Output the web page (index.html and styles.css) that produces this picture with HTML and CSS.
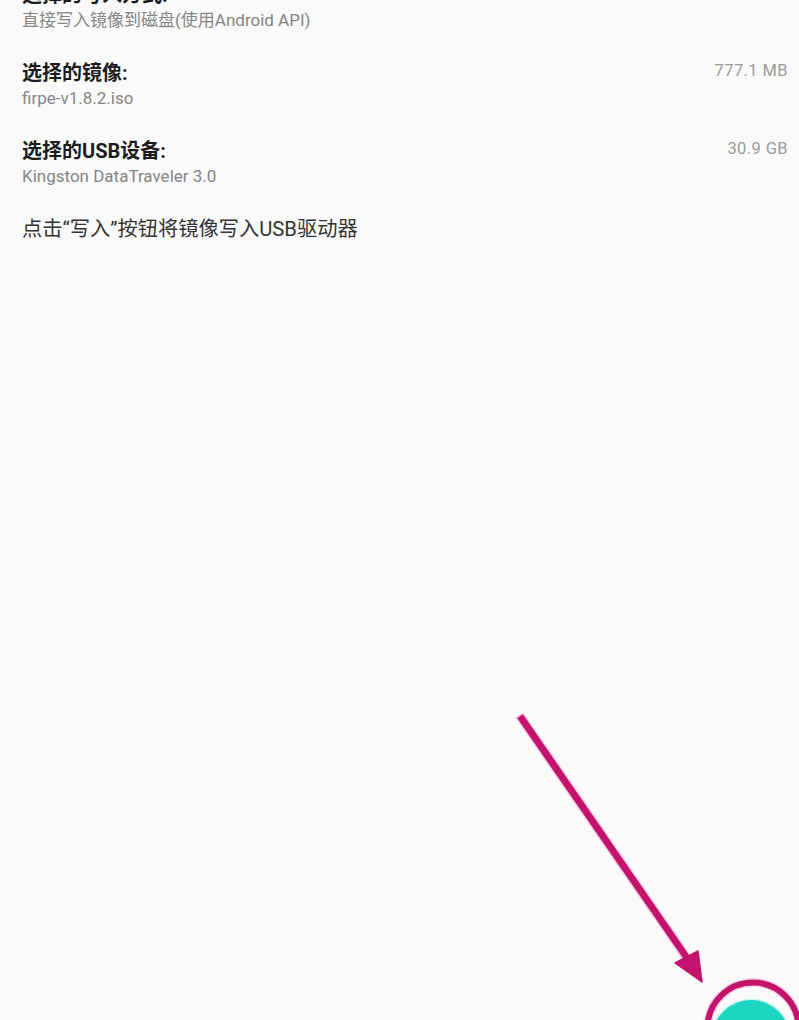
FILE: index.html
```html
<!DOCTYPE html>
<html lang="zh-CN">
<head>
<meta charset="utf-8">
<title>写入</title>
<link rel="stylesheet" href="styles.css">
</head>
<body>
<main class="page">
  <section class="list">
    <div class="row">
      <div class="info">
        <div class="title">选择的写入方式:</div>
        <div class="sub">直接写入镜像到磁盘(使用Android API)</div>
      </div>
    </div>
    <div class="row">
      <div class="info">
        <div class="title">选择的镜像:</div>
        <div class="sub">firpe-v1.8.2.iso</div>
      </div>
      <div class="value">777.1 MB</div>
    </div>
    <div class="row">
      <div class="info">
        <div class="title">选择的USB设备:</div>
        <div class="sub">Kingston DataTraveler 3.0</div>
      </div>
      <div class="value">30.9 GB</div>
    </div>
  </section>
  <p class="hint">点击“写入”按钮将镜像写入USB驱动器</p>
</main>
<div class="fab"></div>
<svg class="annot" width="799" height="1020" viewBox="0 0 799 1020" xmlns="http://www.w3.org/2000/svg">
  <g stroke="#f6b9d8" stroke-opacity="0.6" fill="none">
    <line x1="522" y1="719" x2="687" y2="958" stroke-width="10" stroke-linecap="square"/>
    <circle cx="753" cy="1028" r="45.5" stroke-width="9"/>
  </g>
  <line x1="522" y1="719" x2="687" y2="958" stroke="#c3136c" stroke-width="7" stroke-linecap="square"/>
  <polygon points="702,982 675,963 698,951" fill="#c3136c" stroke="#c3136c" stroke-width="1.5" stroke-linejoin="round"/>
  <circle cx="753" cy="1028" r="45.5" fill="none" stroke="#c3136c" stroke-width="6"/>
</svg>
</body>
</html>
```

FILE: styles.css
```css
html, body {
  margin: 0;
  padding: 0;
}
body {
  background: #fafafa;
  width: 799px;
  height: 1020px;
  overflow: hidden;
  position: relative;
  font-family: Roboto, "Noto Sans CJK SC", sans-serif;
}
.page {
  padding: 0 11px 0 22px;
}
.list {
  margin-top: -18px;
  display: flex;
  flex-direction: column;
  gap: 28px;
}
.row {
  display: flex;
  justify-content: space-between;
  align-items: flex-start;
}
.info {
  display: flex;
  flex-direction: column;
}
.title {
  font-size: 20px;
  line-height: 26px;
  font-weight: 700;
  color: #1c1c1c;
}
.sub {
  font-size: 17px;
  line-height: 24px;
  color: #858585;
}
.value {
  font-size: 16.5px;
  line-height: 20px;
  letter-spacing: 0.4px;
  margin-top: 1px;
  color: #9b9b9b;
}
.hint {
  margin: 28px 0 0;
  font-size: 20.25px;
  line-height: 26px;
  color: #333333;
}
.fab {
  position: absolute;
  left: 712px;
  top: 1000px;
  width: 78px;
  height: 78px;
  border-radius: 50%;
  background: #1dd6c1;
  box-shadow: 0 0 0 1.5px #c9f5ef;
}
.annot {
  position: absolute;
  left: 0;
  top: 0;
  pointer-events: none;
}
```
